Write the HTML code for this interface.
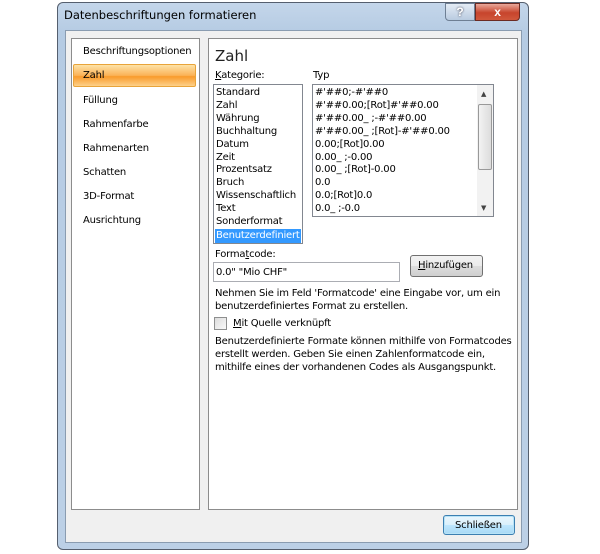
<!DOCTYPE html>
<html><head><meta charset="utf-8"><style>
*{margin:0;padding:0;box-sizing:border-box}
body{width:600px;height:554px;background:#fff;position:relative;overflow:hidden;font-family:"DejaVu Sans","Liberation Sans",sans-serif;font-size:10px;letter-spacing:-0.2px;color:#000}
.a{position:absolute}
.win{left:57px;top:2px;width:472px;height:548px;border:1px solid #555f6e;border-radius:6px;background:linear-gradient(180deg,#c4d6ea 0,#b5cbe3 30px,#bcd0e6 100%)}
.client{left:65px;top:30px;width:457px;height:513px;background:#f0f0f0;border:1px solid #8a9cb0}
.panel{background:#fff;border:1px solid #8c8c8c}
.t{white-space:nowrap;line-height:13px}
u{text-decoration:underline}
</style></head><body>
<div class="a win"></div>
<div class="a t" style="left:64px;top:9px;font-size:11.5px;letter-spacing:0;color:#000">Datenbeschriftungen formatieren</div>
<div class="a" style="left:445px;top:3px;width:30px;height:18px;border:1px solid #6e7f94;border-radius:0 0 0 4px;background:linear-gradient(#e4ecf5,#b9cbe0);color:#fff;text-align:center;font:bold 12px 'Liberation Sans';line-height:16px;text-shadow:0 0 2px #334">?</div>
<div class="a" style="left:475px;top:3px;width:45px;height:18px;border:1px solid #6b2a22;border-radius:0 0 4px 0;background:linear-gradient(#e9a89a,#c7442c 55%,#d0583c);color:#fff;text-align:center;font:bold 12px 'Liberation Sans';line-height:16px">x</div>
<div class="a client"></div>
<div class="a panel" style="left:71px;top:38px;width:129px;height:472px"></div>
<div class="a" style="left:73px;top:64px;width:123px;height:23px;border:1px solid #e8a43a;border-radius:2px;background:linear-gradient(#fde3a8,#fbb256 50%,#f99a2a 55%,#fdd18a)"></div>
<div class="a t" style="left:83px;top:45px">Beschriftungsoptionen</div>
<div class="a t" style="left:83px;top:69px">Zahl</div>
<div class="a t" style="left:83px;top:94px">Füllung</div>
<div class="a t" style="left:83px;top:118px">Rahmenfarbe</div>
<div class="a t" style="left:83px;top:142px">Rahmenarten</div>
<div class="a t" style="left:83px;top:166px">Schatten</div>
<div class="a t" style="left:83px;top:190px">3D-Format</div>
<div class="a t" style="left:83px;top:214px">Ausrichtung</div>
<div class="a panel" style="left:208px;top:38px;width:310px;height:472px"></div>
<div class="a t" style="left:215px;top:47px;font-size:15px;line-height:18px;letter-spacing:0;color:#222">Zahl</div>
<div class="a t" style="left:215px;top:69px"><u>K</u>ategorie:</div>
<div class="a t" style="left:313px;top:69px">Typ</div>
<div class="a" style="left:213px;top:84px;width:90px;height:160px;background:#fff;border:1px solid #828790"></div>
<div class="a t" style="left:216px;top:87px;line-height:12.9px">Standard<br>Zahl<br>Währung<br>Buchhaltung<br>Datum<br>Zeit<br>Prozentsatz<br>Bruch<br>Wissenschaftlich<br>Text<br>Sonderformat</div>
<div class="a t" style="left:215px;top:229px;width:86px;height:14px;background:#3399ff;color:#fff;padding-left:1px;overflow:hidden">Benutzerdefiniert</div>
<div class="a" style="left:312px;top:84px;width:182px;height:133px;background:#fff;border:1px solid #828790"></div>
<div class="a t" style="left:315px;top:87px;line-height:12.9px">#'##0;-#'##0<br>#'##0.00;[Rot]#'##0.00<br>#'##0.00_ ;-#'##0.00<br>#'##0.00_ ;[Rot]-#'##0.00<br>0.00;[Rot]0.00<br>0.00_ ;-0.00<br>0.00_ ;[Rot]-0.00<br>0.0<br>0.0;[Rot]0.0<br>0.0_ ;-0.0</div>
<div class="a" style="left:477px;top:85px;width:16px;height:131px;background:#f2f2f2"></div>
<div class="a" style="left:478px;top:104px;width:14px;height:66px;border:1px solid #999;border-radius:2px;background:linear-gradient(90deg,#f3f3f3,#dcdcdc)"></div>
<div class="a t" style="left:481px;top:88px;font-size:7px;color:#444">▲</div>
<div class="a t" style="left:481px;top:202px;font-size:7px;color:#444">▼</div>
<div class="a t" style="left:215px;top:248px">Forma<u>t</u>code:</div>
<div class="a" style="left:213px;top:262px;width:187px;height:20px;background:#fff;border:1px solid #abadb3"></div>
<div class="a t" style="left:216px;top:266px">0.0" "Mio CHF"</div>
<div class="a" style="left:410px;top:255px;width:73px;height:22px;border:1px solid #707070;border-radius:3px;background:linear-gradient(#f2f2f2,#ebebeb 50%,#dddddd 51%,#cfcfcf)"></div>
<div class="a t" style="left:418px;top:259px"><u>H</u>inzufügen</div>
<div class="a t" style="left:215px;top:287px">Nehmen Sie im Feld 'Formatcode' eine Eingabe vor, um ein<br>benutzerdefiniertes Format zu erstellen.</div>
<div class="a" style="left:214px;top:317px;width:13px;height:13px;border:1px solid #8e8f8f;background:linear-gradient(135deg,#dcdcdc,#fafafa)"></div>
<div class="a t" style="left:233px;top:317px"><u>M</u>it Quelle verknüpft</div>
<div class="a t" style="left:215px;top:335px">Benutzerdefinierte Formate können mithilfe von Formatcodes<br>erstellt werden. Geben Sie einen Zahlenformatcode ein,<br>mithilfe eines der vorhandenen Codes als Ausgangspunkt.</div>
<div class="a" style="left:443px;top:515px;width:72px;height:20px;border:1px solid #3c7fb1;border-radius:3px;background:linear-gradient(#eaf6fd,#d9f0fc 50%,#bee6fd 51%,#a7d9f5);box-shadow:inset 0 0 0 1px #b7e3f7"></div>
<div class="a t" style="left:455px;top:519px">Schließen</div>
</body></html>
